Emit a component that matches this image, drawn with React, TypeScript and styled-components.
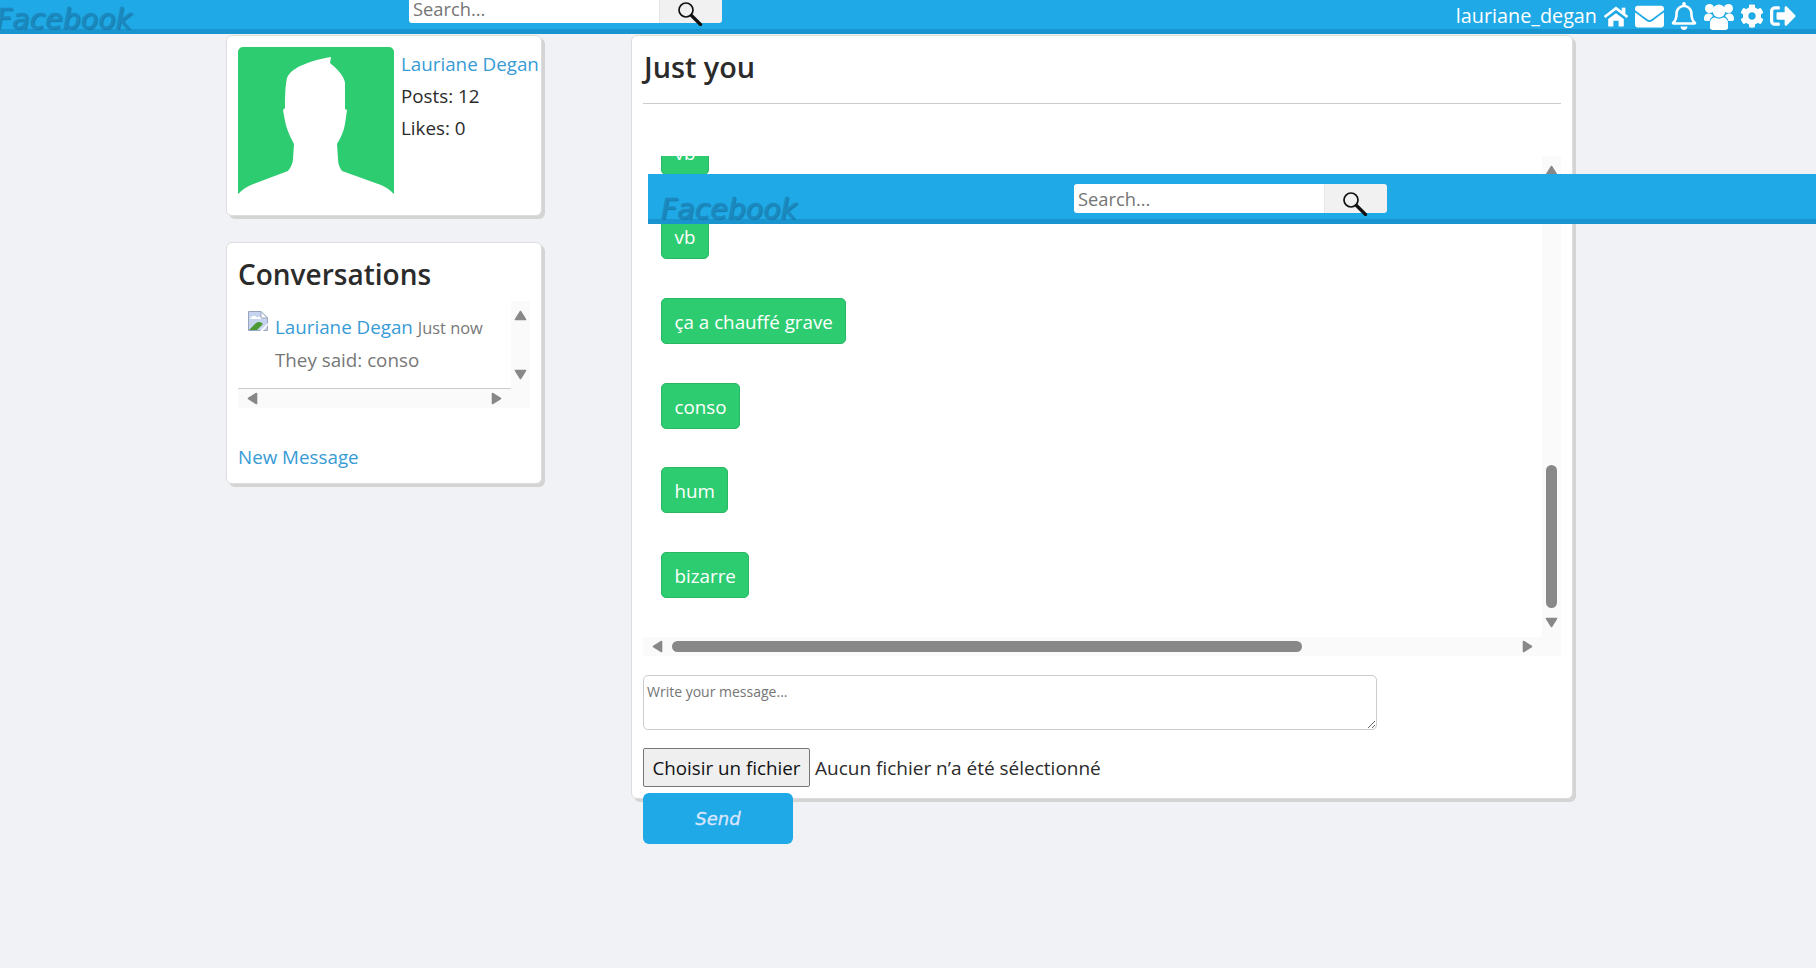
import * as React from 'react';
import styled, { createGlobalStyle, css } from 'styled-components';
import { FaEnvelope, FaRegBell, FaCog, FaSignOutAlt } from 'react-icons/fa';

const messages = ['vb', 'vb', 'vb', 'vb', 'vb', 'vb', 'vb', 'vb', 'vb', 'vb', 'vb', 'vb', 'ça a chauffé grave', 'conso', 'hum', 'bizarre'];

const arrowPoints = {
    up: '1.5,10.5 6.5,2.5 11.5,10.5',
    down: '1.5,2.5 6.5,10.5 11.5,2.5',
    left: '10.5,1.5 2.5,6.5 10.5,11.5',
    right: '2.5,1.5 10.5,6.5 2.5,11.5',
};

const ScrollArrow = ({ to }: { to: keyof typeof arrowPoints }) => (
    <ArrowButton $vertical={to === 'up' || to === 'down'}>
        <svg width="13" height="13" viewBox="0 0 13 13">
            <polygon points={arrowPoints[to]} fill="#888" stroke="#888" strokeWidth="1.6" strokeLinejoin="round" />
        </svg>
    </ArrowButton>
);

type ScrollBoxProps = {
    width: number;
    height: number;
    thumbV?: number;
    thumbH?: number;
    viewRef?: React.Ref<HTMLDivElement>;
    children: React.ReactNode;
};

const ScrollBox = ({ width, height, thumbV, thumbH, viewRef, children }: ScrollBoxProps) => (
    <ScrollFrame $width={width} $height={height}>
        <ScrollView ref={viewRef}>{children}</ScrollView>
        <VerticalBar>
            <ScrollArrow to="up" />
            <VerticalTrack>{thumbV && <VerticalThumb $size={thumbV} />}</VerticalTrack>
            <ScrollArrow to="down" />
        </VerticalBar>
        <HorizontalBar>
            <ScrollArrow to="left" />
            <HorizontalTrack>{thumbH && <HorizontalThumb $size={thumbH} />}</HorizontalTrack>
            <ScrollArrow to="right" />
        </HorizontalBar>
    </ScrollFrame>
);

const Nav = ({ withUser, floating }: { withUser?: boolean; floating?: boolean }) => (
    <Bar $floating={floating}>
        <Logo>Facebook</Logo>
        <Search>
            <SearchInput placeholder="Search..." />
            <SearchButton>
                <SearchIcon viewBox="0 0 25 24">
                    <circle cx="8" cy="8" r="7" fill="none" stroke="#111" strokeWidth="1.7" />
                    <path d="M13.5 13.5L22.5 22.5" stroke="#111" strokeWidth="3.2" strokeLinecap="round" />
                </SearchIcon>
            </SearchButton>
        </Search>
        {withUser && (
            <UserMenu>
                <UserName>lauriane_degan</UserName>
                <svg width="26" height="21" viewBox="0 0 25 20" fill="#fff">
                    <path d="M1.5 10.5L12.5 2L23.5 10.5" fill="none" stroke="#fff" strokeWidth="2.6" />
                    <rect x="18" y="1.5" width="3.5" height="6" />
                    <path d="M5 12.5L12.5 6.8L20 12.5V19.5H15V14H10V19.5H5Z" />
                </svg>
                <FaEnvelope size={29} />
                <FaRegBell size={28} />
                <svg width="30" height="27" viewBox="0 0 30 27" fill="#fff">
                    <circle cx="5.5" cy="5.5" r="4.5" />
                    <circle cx="24.5" cy="5.5" r="4.5" />
                    <path d="M0 16C0 12 2 10.5 5 10.5C7 10.5 8 11.5 9 13C7 14.5 6 16 5.5 18H2C1 18 0 17.5 0 16Z" />
                    <path d="M30 16C30 12 28 10.5 25 10.5C23 10.5 22 11.5 21 13C23 14.5 24 16 24.5 18H28C29 18 30 17.5 30 16Z" />
                    <circle cx="15" cy="8" r="6.5" />
                    <path d="M6 25V20C6 16 9 14.5 11 14.5C13 16 17 16 19 14.5C21 14.5 24 16 24 20V25C24 26.5 22 27 20 27H10C8 27 6 26.5 6 25Z" />
                </svg>
                <FaCog size={24} />
                <FaSignOutAlt size={26} />
            </UserMenu>
        )}
    </Bar>
);

const App = () => {
    // the chat opens on the last message
    const chatRef = React.useRef<HTMLDivElement>(null);

    React.useLayoutEffect(() => {
        if (chatRef.current) {
            chatRef.current.scrollTop = chatRef.current.scrollHeight;
        }
    }, []);

    return (
        <Page>
            <GlobalStyle />
            <Nav withUser />
            <Main>
                <SideColumn>
                    <Card $height={181}>
                        <Profile>
                            <Avatar viewBox="0 0 156 147">
                                <path
                                    fill="#2ecc71"
                                    d="M5 0H151A5 5 0 0 1 156 5V147C152 143 148 140 143 138L104 124C101 120 100 116 100 112L99 97C103 90 106 84 107 77L109 63L107 62L107 36C106 28 98 21 92 16L93 10C76 13 54 19 49 31C47 40 47 52 47 61L45 63L47 74C49 84 53 91 56 97L55 112C55 116 53 120 50 124L13 138C8 140 4 143 0 147V5A5 5 0 0 1 5 0Z"
                                />
                            </Avatar>
                            <ProfileText>
                                <ProfileLine>
                                    <UserLink>Lauriane Degan</UserLink>
                                </ProfileLine>
                                <ProfileLine>Posts: 12</ProfileLine>
                                <ProfileLine>Likes: 0</ProfileLine>
                            </ProfileText>
                        </Profile>
                    </Card>
                    <Card $height={242}>
                        <CardTitle>Conversations</CardTitle>
                        <ScrollBox width={292} height={107}>
                            <ConversationItem>
                                <BrokenImage viewBox="0 0 20 20">
                                    <path fill="#c6d4f0" stroke="#9aa5bd" d="M.5.5H13L19.5 7V19.5H.5Z" />
                                    <path fill="#fff" d="M2 8C4 4 7 4 9 6.5C11 5 13 6 14 8Z" />
                                    <path fill="#4c9a34" d="M1 19L7 13C10 10 13 11 15 13L9 19Z" />
                                    <path fill="#fff" d="M12 20L20 12V14L15 20Z" />
                                    <path fill="#fff" stroke="#9aa5bd" d="M13 .5V7H19.5Z" />
                                </BrokenImage>
                                <ConversationBody>
                                    <div>
                                        <UserLink>Lauriane Degan</UserLink> <Time>Just now</Time>
                                    </div>
                                    <Preview>They said: conso</Preview>
                                </ConversationBody>
                            </ConversationItem>
                        </ScrollBox>
                        <NewMessage>New Message</NewMessage>
                    </Card>
                </SideColumn>

                <ChatCard $height={764}>
                    <ChatTitle>Just you</ChatTitle>
                    <Divider />
                    <ChatSpacer />
                    <ScrollBox width={918} height={500} thumbV={143} thumbH={630} viewRef={chatRef}>
                        <ChatInner>
                            {messages.map((message, index) => (
                                <Row key={index}>
                                    <Bubble>{message}</Bubble>
                                </Row>
                            ))}
                        </ChatInner>
                    </ScrollBox>
                    <MessageInput placeholder="Write your message..." />
                    <FileRow>
                        <FileButton type="button">Choisir un fichier</FileButton>
                        <FileName>Aucun fichier n’a été sélectionné</FileName>
                    </FileRow>
                    <SendButton type="button">Send</SendButton>
                </ChatCard>
            </Main>
            <Nav floating />
        </Page>
    );
};

export default App;

const GlobalStyle = createGlobalStyle`
    html, body {
        margin: 0;
        height: 100%;
        overflow: hidden;
        background-color: #f0f2f5;
    }

    * {
        box-sizing: border-box;
    }
`;

const Page = styled.div`
    position: relative;
    height: 968px;
    overflow: hidden;
    font-family: 'Open Sans', 'Liberation Sans', sans-serif;
    font-size: 18.8px;
    color: #2b2b2b;
`;

const Bar = styled.div<{ $floating?: boolean }>`
    display: flex;
    align-items: flex-start;
    height: 50px;
    padding-top: 10px;
    background-color: #1fa9e6;
    border-bottom: 5px solid #1a94cf;

    ${({ $floating }) =>
        $floating
            ? css`
                  position: absolute;
                  top: 174px;
                  left: 648px;
                  width: 1168px;
              `
            : css`
                  margin: -16px 0 0 -17px;
                  padding-right: 20px;
              `}
`;

const Logo = styled.div`
    flex: none;
    width: 150px;
    margin: 9px 0 0 13px;
    font-family: 'DejaVu Sans', sans-serif;
    font-size: 28.4px;
    line-height: 34px;
    font-weight: 400;
    font-style: italic;
    white-space: nowrap;
    color: #1b88c0;
    -webkit-text-stroke: 0.5px #1b88c0;
    text-shadow: 1px 1px 1px #1678a8;
`;

const Search = styled.div`
    display: flex;
    flex: none;
    width: 313px;
    height: 29px;
    margin-left: 263px;
`;

const SearchInput = styled.input`
    flex: 1;
    min-width: 0;
    padding: 0 4px;
    border: 0;
    border-radius: 3px 0 0 3px;
    outline: 0;
    background-color: #fff;
    font: 18.3px 'Open Sans', sans-serif;

    &::placeholder {
        color: #757575;
    }
`;

const SearchButton = styled.div`
    flex: none;
    width: 63px;
    padding: 8px 0 0 18px;
    border-left: 1px solid #e6e6e6;
    border-radius: 0 3px 3px 0;
    background-color: #f1f1f1;
`;

const SearchIcon = styled.svg`
    display: block;
    width: 25px;
    height: 24px;
`;

const UserMenu = styled.div`
    display: flex;
    align-items: center;
    gap: 6px;
    height: 26px;
    margin: 9px 0 0 auto;
    color: #fff;
`;

const UserName = styled.span`
    margin-top: -1px;
    font-size: 19.8px;
`;

const Main = styled.div`
    display: flex;
    align-items: flex-start;
    gap: 89px;
    margin-top: 1px;
    padding-left: 226px;
`;

const SideColumn = styled.div`
    display: flex;
    flex-direction: column;
    gap: 26px;
    width: 316px;
`;

const Card = styled.div<{ $height: number }>`
    height: ${({ $height }) => $height}px;
    padding: 11px;
    background-color: #fff;
    border: 1px solid #ddd;
    border-radius: 6px;
    box-shadow: 3px 3px 0 #d4d4d4;
`;

const Profile = styled.div`
    display: flex;
    gap: 7px;
`;

const Avatar = styled.svg`
    flex: none;
    width: 156px;
    height: 147px;
`;

const ProfileText = styled.div`
    padding-top: 1px;
    white-space: nowrap;
`;

const ProfileLine = styled.div`
    height: 32px;
    line-height: 32px;
`;

const UserLink = styled.a`
    color: #379bd6;
`;

const CardTitle = styled.h2`
    margin: 0 0 6px;
    font-size: 28px;
    line-height: 41px;
    font-weight: 600;
`;

const ScrollFrame = styled.div<{ $width: number; $height: number }>`
    display: grid;
    grid-template-columns: minmax(0, 1fr) 19px;
    grid-template-rows: minmax(0, 1fr) 19px;
    width: ${({ $width }) => $width}px;
    height: ${({ $height }) => $height}px;
    background-color: #fafafa;
`;

const ScrollView = styled.div`
    overflow: hidden;
    background-color: #fff;
`;

const VerticalBar = styled.div`
    display: flex;
    flex-direction: column;
`;

const HorizontalBar = styled.div`
    display: flex;
`;

const ArrowButton = styled.div<{ $vertical: boolean }>`
    display: flex;
    flex: none;
    align-items: center;
    justify-content: center;
    width: ${({ $vertical }) => ($vertical ? 19 : 29)}px;
    height: ${({ $vertical }) => ($vertical ? 29 : 19)}px;
`;

const VerticalTrack = styled.div`
    display: flex;
    flex: 1;
    flex-direction: column;
    justify-content: flex-end;
    align-items: center;
`;

const HorizontalTrack = styled.div`
    display: flex;
    flex: 1;
    align-items: center;
`;

const VerticalThumb = styled.div<{ $size: number }>`
    width: 11px;
    height: ${({ $size }) => $size}px;
    border-radius: 6px;
    background-color: #888;
`;

const HorizontalThumb = styled.div<{ $size: number }>`
    width: ${({ $size }) => $size}px;
    height: 11px;
    border-radius: 6px;
    background-color: #888;
`;

const ConversationItem = styled.div`
    display: flex;
    align-items: flex-start;
    height: 88px;
    padding: 10px 0 0 10px;
    border-bottom: 1px solid #ccc;
`;

const BrokenImage = styled.svg`
    flex: none;
    width: 20px;
    height: 20px;
`;

const ConversationBody = styled.div`
    margin-left: 7px;
    white-space: nowrap;
    line-height: 32px;
`;

const Time = styled.span`
    font-size: 16.4px;
    color: #777;
`;

const Preview = styled.div`
    color: #777;
`;

const NewMessage = styled.a`
    display: block;
    margin-top: 33px;
    line-height: 32px;
    color: #379bd6;
`;

const ChatCard = styled(Card)`
    width: 942px;
`;

const ChatTitle = styled.h2`
    margin: 0 0 0 1px;
    font-size: 28.8px;
    line-height: 39px;
    font-weight: 600;
`;

const Divider = styled.div`
    height: 1px;
    margin-top: 17px;
    background-color: #ccc;
`;

const ChatSpacer = styled.div`
    height: 52px;
`;

const ChatInner = styled.div`
    width: 1200px;
    padding: 68px 0 0 18px;
`;

const Row = styled.div`
    height: 84.67px;
`;

const Bubble = styled.div`
    display: inline-block;
    height: 46px;
    padding: 0 12.5px;
    line-height: 46px;
    color: #fff;
    background-color: #2ecc71;
    border: 1px solid #29b765;
    border-radius: 5px;
`;

const MessageInput = styled.textarea`
    display: block;
    width: 734px;
    height: 55px;
    margin-top: 19px;
    padding: 6px 3px;
    border: 1px solid #ccc;
    border-radius: 5px;
    outline: 0;
    font: 14px 'Open Sans', sans-serif;

    &::placeholder {
        color: #757575;
    }
`;

const FileRow = styled.div`
    display: flex;
    align-items: center;
    gap: 5px;
    margin-top: 18px;
    white-space: nowrap;
`;

const FileButton = styled.button`
    width: 167px;
    height: 39px;
    padding: 0;
    border: 1px solid #767676;
    border-radius: 2px;
    background-color: #efefef;
    color: #111;
    font: inherit;
`;

const FileName = styled.span`
    font-size: 19px;
`;

const SendButton = styled.button`
    display: block;
    width: 150px;
    height: 51px;
    margin-top: 6px;
    border: 0;
    border-radius: 6px;
    background-color: #1fa9e6;
    color: #d8e6ff;
    font: italic 400 18px 'DejaVu Sans', sans-serif;
    -webkit-text-stroke: 0.3px #d8e6ff;
`;
